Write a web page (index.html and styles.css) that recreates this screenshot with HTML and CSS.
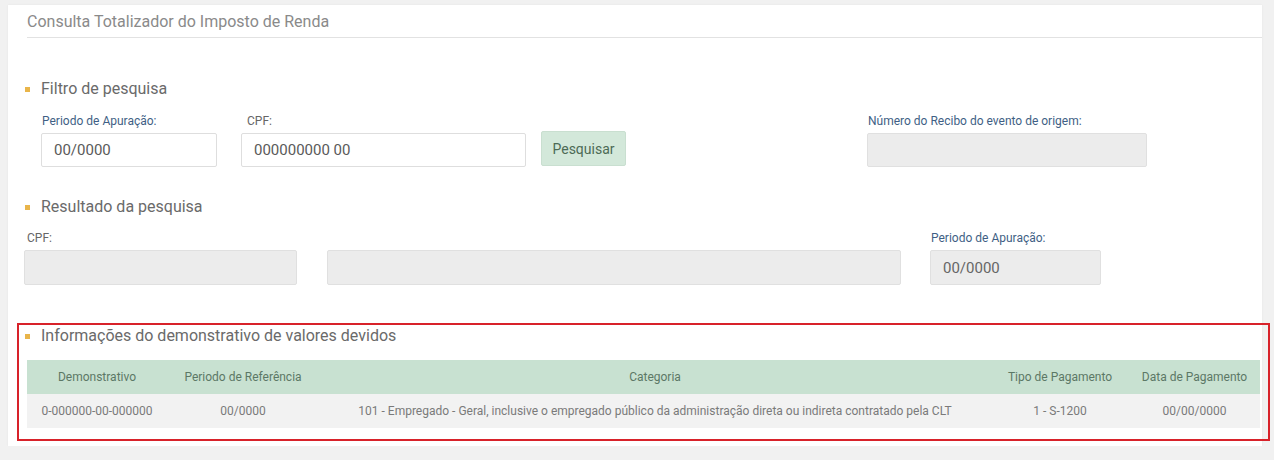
FILE: index.html
```html
<!DOCTYPE html>
<html lang="pt-BR">

<head>
    <meta charset="UTF-8">
    <meta name="viewport" content="width=device-width, initial-scale=1.0">
    <title>Consulta Totalizador do Imposto de Renda</title>
    <link rel="stylesheet" href="styles.css">
</head>

<body>
    <main class="panel">
        <h1 class="title">Consulta Totalizador do Imposto de Renda</h1>

        <section class="block filtro">
            <h2 class="heading">Filtro de pesquisa</h2>
            <div class="row">
                <div class="field f-periodo">
                    <label class="lbl blue">Periodo de Apuração:</label>
                    <input type="text" class="inp" value="00/0000">
                </div>
                <div class="field f-cpf">
                    <label class="lbl">CPF:</label>
                    <input type="text" class="inp" value="000000000 00">
                </div>
                <button class="btn">Pesquisar</button>
                <div class="field f-recibo">
                    <label class="lbl blue">Número do Recibo do evento de origem:</label>
                    <input type="text" class="inp" disabled>
                </div>
            </div>
        </section>

        <section class="block resultado">
            <h2 class="heading">Resultado da pesquisa</h2>
            <div class="row">
                <div class="field r-cpf">
                    <label class="lbl">CPF:</label>
                    <input type="text" class="inp" disabled>
                </div>
                <div class="field r-nome">
                    <label class="lbl">&nbsp;</label>
                    <input type="text" class="inp" disabled>
                </div>
                <div class="field r-periodo">
                    <label class="lbl blue">Periodo de Apuração:</label>
                    <input type="text" class="inp" value="00/0000" disabled>
                </div>
            </div>
        </section>

        <section class="block info">
            <h2 class="heading">Informações do demonstrativo de valores devidos</h2>
            <table class="grid">
                <thead>
                    <tr>
                        <th class="c1">Demonstrativo</th>
                        <th class="c2">Periodo de Referência</th>
                        <th class="c3">Categoria</th>
                        <th class="c4">Tipo de Pagamento</th>
                        <th class="c5">Data de Pagamento</th>
                    </tr>
                </thead>
                <tbody>
                    <tr>
                        <td>0-000000-00-000000</td>
                        <td>00/0000</td>
                        <td>101 - Empregado - Geral, inclusive o empregado público da administração direta ou indireta contratado pela CLT</td>
                        <td>1 - S-1200</td>
                        <td>00/00/0000</td>
                    </tr>
                </tbody>
            </table>
        </section>

        <!-- destaque em vermelho -->
        <div class="mark"></div>
    </main>
</body>

</html>
```

FILE: styles.css
```css
* {
    margin: 0;
    padding: 0;
    box-sizing: border-box;
}

body {
    background-color: #f1f1f1;
    font-family: Roboto, "Liberation Sans", sans-serif;
    color: #666;
}

.panel {
    position: relative;
    margin: 5px 12px 0 8px;
    height: 441px;
    background-color: #fff;
    box-shadow: 0 0 2px 0 rgba(0, 0, 0, 0.06);
}

.title {
    margin-left: 19px;
    padding: 8px 0 6px 0;
    font-size: 16px;
    line-height: 18px;
    font-weight: 400;
    color: #8a8a8a;
    border-bottom: 1px solid #e2e2e2;
}

.block {
    padding-left: 17px;
}

.filtro {
    margin-top: 42px;
}

.resultado {
    margin-top: 31px;
}

.info {
    margin-top: 42px;
}

.heading {
    display: flex;
    align-items: center;
    gap: 11px;
    font-size: 16px;
    line-height: 18px;
    font-weight: 400;
    color: #6a6a6a;
}

.heading::before {
    content: "";
    width: 5px;
    height: 5px;
    background-color: #e9b54a;
}

.row {
    display: flex;
    align-items: flex-end;
}

.filtro .row {
    margin-top: 16px;
    padding-left: 16px;
}

.resultado .row {
    margin-top: 15px;
    margin-left: -1px;
}

.field {
    display: flex;
    flex-direction: column;
    gap: 5px;
}

.lbl {
    font-size: 12px;
    line-height: 14px;
    color: #666;
    padding-left: 1px;
}

.lbl.blue {
    color: #3f5f85;
}

.inp {
    height: 34px;
    padding: 0 12px;
    font-family: inherit;
    font-size: 15px;
    color: #5a5a5a;
    background-color: #fff;
    border: 1px solid #dedede;
    border-radius: 2px;
    outline: none;
}

.inp:disabled {
    background-color: #ececec;
    border-color: #e0e0e0;
    color: #666;
}

.f-periodo {
    width: 176px;
}

.f-cpf {
    width: 285px;
    margin-left: 24px;
}

.f-cpf .lbl {
    padding-left: 6px;
}

.btn {
    width: 85px;
    height: 35px;
    margin-left: 15px;
    margin-bottom: 1px;
    font-family: inherit;
    font-size: 14px;
    color: #4d6b56;
    background-color: #d3e8da;
    border: 1px solid #c9dfd0;
    border-radius: 2px;
}

.f-recibo {
    width: 280px;
    margin-left: 241px;
}

.r-cpf {
    width: 273px;
}

.r-cpf .lbl {
    padding-left: 3px;
}

.r-nome {
    width: 574px;
    margin-left: 30px;
}

.r-periodo {
    width: 171px;
    margin-left: 29px;
}

.resultado .inp {
    height: 35px;
}

.grid {
    margin-top: 15px;
    margin-left: 2px;
    width: 1233px;
    border-collapse: collapse;
    table-layout: fixed;
    font-size: 12px;
}

.grid th {
    height: 34px;
    font-weight: 400;
    color: #5c7866;
    background-color: #c8e1d1;
    text-align: center;
}

.grid td {
    height: 34px;
    color: #7a7a7a;
    background-color: #f2f2f2;
    text-align: center;
    white-space: nowrap;
}

.c1 { width: 140px; }
.c2 { width: 152px; }
.c3 { width: 672px; }
.c4 { width: 138px; }
.c5 { width: 131px; }

.mark {
    position: absolute;
    left: 9px;
    top: 318px;
    width: 1253px;
    height: 118px;
    border: 2px solid #d8222a;
}
```
